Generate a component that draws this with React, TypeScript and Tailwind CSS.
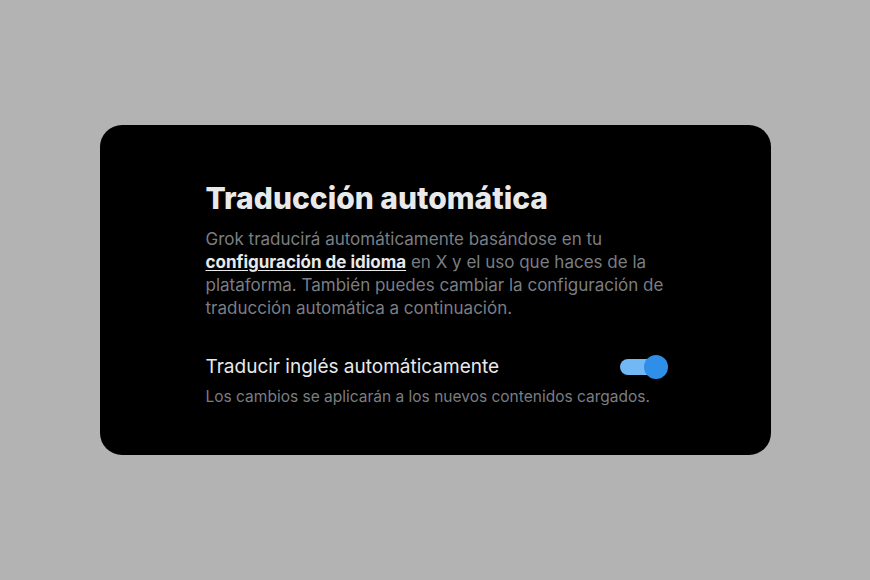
import { useState } from "react";

function Toggle({ on, cb }: { on: boolean; cb: Function }) {
  return (
    <button
      type="button"
      onClick={() => cb(!on)}
      className="relative flex items-center w-[48px] h-[24px] shrink-0"
    >
      <span
        className={
          "block w-[40px] h-[16px] rounded-full " +
          (on ? "bg-[#72b8f4]" : "bg-[#3e4144]")
        }
      />
      <span
        className={
          "absolute top-0 w-[24px] h-[24px] rounded-full " +
          (on ? "left-[24px] bg-[#2f8ee8]" : "left-0 bg-[#e7e9ea]")
        }
      />
    </button>
  );
}

export default function App() {
  const [autoTranslate, setAutoTranslate] = useState(true);

  return (
    <div
      className="w-[870px] h-[580px] bg-[#b3b3b3] flex items-center justify-center"
      style={{ fontFamily: "Inter, 'Noto Sans', sans-serif" }}
    >
      <div className="w-[671px] h-[330px] bg-black rounded-[22px] pl-[106px] pr-[103px] pt-[53px]">
        <h1 className="text-[30px] leading-[40px] font-extrabold text-[#e7e9ea]">
          Traducción automática
        </h1>
        <p className="mt-[10px] text-[17px] leading-[23px] text-[#7a7e83]">
          Grok traducirá automáticamente basándose en tu{" "}
          <a className="font-bold text-[#e7e9ea] underline underline-offset-2">
            configuración de idioma
          </a>{" "}
          en X y el uso que haces de la plataforma. También puedes cambiar la
          configuración de traducción automática a continuación.
        </p>
        <div className="mt-[35px] flex items-center justify-between">
          <span className="text-[19px] leading-[24px] text-[#e7e9ea]">
            Traducir inglés automáticamente
          </span>
          <Toggle on={autoTranslate} cb={setAutoTranslate} />
        </div>
        <p className="mt-[8px] text-[15.5px] leading-[20px] text-[#7a7e83]">
          Los cambios se aplicarán a los nuevos contenidos cargados.
        </p>
      </div>
    </div>
  );
}
